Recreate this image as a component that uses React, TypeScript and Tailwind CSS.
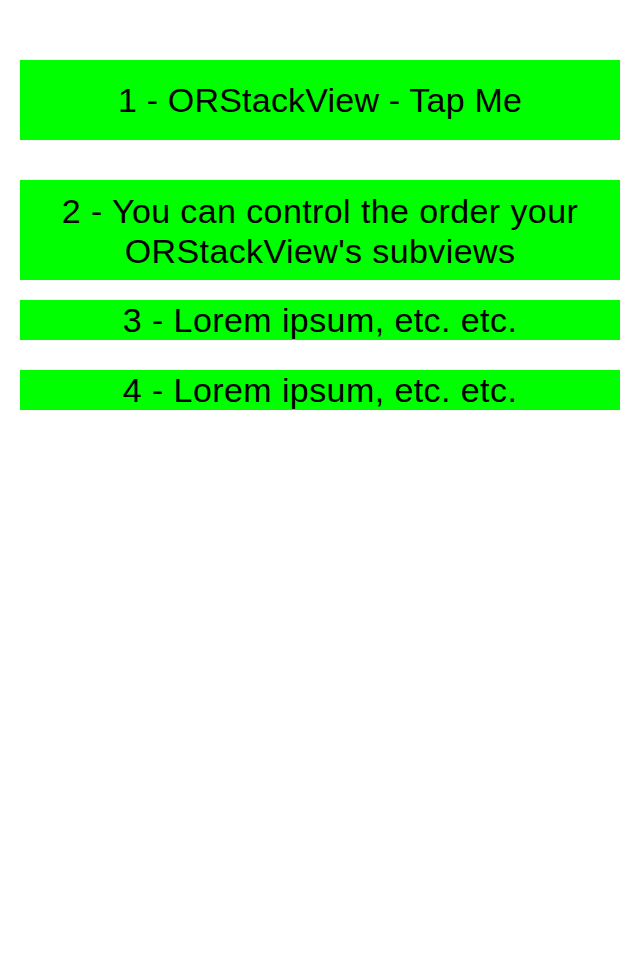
export default function App() {
  const font = { fontFamily: '"Liberation Sans", Arial, sans-serif' };
  return (
    <div className="w-[640px] h-[960px] bg-white flex flex-col px-5 pt-[60px]" style={font}>
      <div className="h-[80px] bg-[#00ff00] flex items-center justify-center text-center text-[34px] leading-[40px] tracking-[0.2px] text-black">
        1 - ORStackView - Tap Me
      </div>
      <div className="mt-10 h-[100px] bg-[#00ff00] flex items-center justify-center text-center text-[34px] leading-[40px] tracking-[0.4px] text-black">
        <span className="pt-[2px]">
          2 - You can control the order your
          <br />
          ORStackView's subviews
        </span>
      </div>
      <div className="mt-5 h-10 bg-[#00ff00] flex items-center justify-center text-center text-[34px] leading-[40px] tracking-[0.42px] text-black">
        3 - Lorem ipsum, etc. etc.
      </div>
      <div className="mt-[30px] h-10 bg-[#00ff00] flex items-center justify-center text-center text-[34px] leading-[40px] tracking-[0.42px] text-black">
        4 - Lorem ipsum, etc. etc.
      </div>
    </div>
  );
}
